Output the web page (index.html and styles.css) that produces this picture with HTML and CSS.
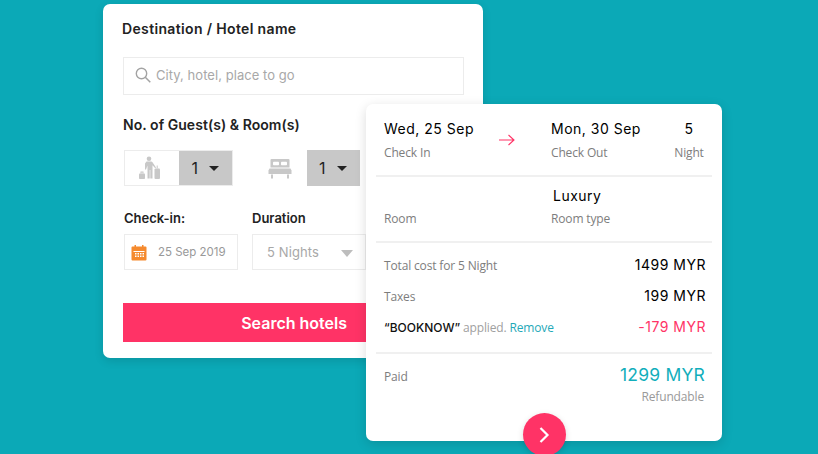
FILE: index.html
```html
<!DOCTYPE html>
<html lang="en">
<head>
    <meta charset="UTF-8">
    <title>Hotel booking</title>
    <link rel="stylesheet" href="styles.css">
</head>
<body>
    <form class="search-card">
        <h2 class="field-title">Destination / Hotel name</h2>
        <div class="search-input">
            <svg class="search-icon" width="16" height="16" viewBox="0 0 16 16"><circle cx="6.500" cy="6.500" r="5.200" fill="none" stroke="#a3a3a3" stroke-width="1.400"/><path d="M10.300 10.300l5 5" stroke="#a3a3a3" stroke-width="1.500" fill="none"/></svg>
            <span>City, hotel, place to go</span>
        </div>
        <h2 class="field-title guests-title">No. of Guest(s) &amp; Room(s)</h2>
        <div class="guests-row">
            <div class="counter boxed">
                <span class="counter-icon">
                    <svg width="24" height="24" viewBox="0 0 24 24" fill="#c8c8c8"><circle cx="12" cy="2.800" r="2.300"/><path d="M9.500 5.500h5l1 .8 3.500 5.200-.8.800-2.700-3V22.500h-2.200v-8.500h-.6v8.500h-2.200V9.500L9 13.500H8V7.500z"/><rect x="2" y="17.500" width="6" height="5.500" rx=".8"/><path d="M3.500 17.500V15.500h3v2h-1v-1h-1v1z"/><rect x="17.500" y="12.500" width="5.500" height="10.500" rx="1"/><rect x="19.700" y="9.500" width="1" height="3"/></svg>
                </span>
                <span class="counter-value">1 <i class="caret"></i></span>
            </div>
            <div class="counter">
                <span class="counter-icon bed">
                    <svg width="24" height="21" viewBox="0 0 24 21" fill="#c8c8c8"><path d="M3.500 1h17a1 1 0 0 1 1 1v7.500h-19V2a1 1 0 0 1 1-1z"/><rect x="5" y="3.800" width="6" height="3.400" rx=".8" fill="#fff"/><rect x="13" y="3.800" width="6" height="3.400" rx=".8" fill="#fff"/><path d="M1.500 10.500h21l1 2v3.500H.5v-3.500z"/><rect x="3" y="16.500" width="2" height="4"/><rect x="19" y="16.500" width="2" height="4"/></svg>
                </span>
                <span class="counter-value">1 <i class="caret"></i></span>
            </div>
        </div>
        <div class="dates-row">
            <div class="date-col">
                <h3 class="small-title">Check-in:</h3>
                <div class="date-box">
                    <svg width="16" height="17" viewBox="0 0 16 17"><path fill="#f58a2e" d="M1.500 2.500H3.500V1h1.500v1.500h6V1h1.500v1.500h2a1 1 0 0 1 1 1v12a1 1 0 0 1-1 1h-13a1 1 0 0 1-1-1v-12a1 1 0 0 1 1-1z"/><path fill="#fff" d="M2.500 7h11v1h-11zM4 9h1.500v1.500H4zm2.500 0H8v1.500H6.500zM9 9h1.500v1.500H9zm2.500 0H13v1.500h-1.500zM4 11.500h1.500V13H4zm2.500 0H8V13H6.500zm2.500 0h1.500V13H9zm2.500 0H13V13h-1.500z"/></svg>
                    <span>25 Sep 2019</span>
                </div>
            </div>
            <div class="duration-col">
                <h3 class="small-title">Duration</h3>
                <div class="duration-box"><span>5 Nights</span><i class="caret grey"></i></div>
            </div>
        </div>
        <button type="button" class="search-btn"><span>Search hotels</span></button>
    </form>

    <section class="summary-card">
        <div class="summary-row top-row">
            <div class="col-checkin">
                <div class="value">Wed, 25 Sep</div>
                <div class="label">Check In</div>
            </div>
            <svg class="arrow" width="16" height="12" viewBox="0 0 16 12"><path d="M0 6h14.500M9.500 1l5.500 5-5.500 5" fill="none" stroke="#ff3366" stroke-width="1.100"/></svg>
            <div class="col-checkout">
                <div class="value">Mon, 30 Sep</div>
                <div class="label">Check Out</div>
            </div>
            <div class="col-night">
                <div class="value">5</div>
                <div class="label">Night</div>
            </div>
        </div>
        <div class="summary-row room-row">
            <div class="label">Room</div>
            <div class="col-room">
                <div class="value">Luxury</div>
                <div class="label">Room type</div>
            </div>
        </div>
        <div class="cost-list">
            <div class="cost-line">
                <span class="label">Total cost for 5 Night</span>
                <span class="value">1499 MYR</span>
            </div>
            <div class="cost-line">
                <span class="label">Taxes</span>
                <span class="value">199 MYR</span>
            </div>
            <div class="cost-line">
                <span class="label"><b>“BOOKNOW”</b> <em>applied.</em> <a href="#">Remove</a></span>
                <span class="value pink">-179 MYR</span>
            </div>
        </div>
        <div class="paid-row">
            <span class="label">Paid</span>
            <div class="paid-total">
                <div class="paid-value">1299 MYR</div>
                <div class="label light">Refundable</div>
            </div>
        </div>
        <button type="button" class="next-btn">
            <svg width="12" height="18" viewBox="0 0 12 18"><path d="M2.500 2l7 7-7 7" fill="none" stroke="#fff" stroke-width="2.200"/></svg>
        </button>
    </section>
</body>
</html>
```

FILE: styles.css
```css
* { box-sizing: border-box; }
html, body { height: 100%; }
body {
    margin: 0;
    background-color: #0ba9b7;
    font-family: "Lato", sans-serif;
    overflow: hidden;
    position: relative;
}

/* Left card with the search form */
.search-card {
    position: absolute;
    left: 103px;
    top: 4px;
    width: 380px;
    height: 354px;
    padding: 16px 20px 0 20px;
    background-color: #fff;
    border-radius: 7px;
    box-shadow: 0 3px 10px rgba(0, 0, 0, 0.12);
}
.field-title {
    margin: 0 0 0 -1px;
    font-family: "Inter", sans-serif;
    font-size: 14px;
    font-weight: 600;
    line-height: 18px;
    letter-spacing: 0.35px;
    color: #222;
}
.search-input {
    display: flex;
    align-items: center;
    gap: 5px;
    width: 341px;
    height: 38px;
    margin-top: 19px;
    padding: 0 0 2px 11px;
    border: 1px solid #ececec;
    font-family: "Inter", sans-serif;
    font-size: 13px;
    letter-spacing: 0.05px;
    color: #a8a8a8;
}
.guests-title { margin: 21px 0 0 0; letter-spacing: 0.05px; }
.guests-row {
    display: flex;
    gap: 35px;
    margin: 16px 0 0 1px;
}
.counter {
    display: flex;
    height: 36px;
}
.counter.boxed { width: 109px; border: 1px solid #ececec; }
.counter-icon {
    display: flex;
    align-items: center;
    justify-content: center;
    width: 55px;
    padding-right: 7px;
}
.counter-icon.bed { width: 35px; margin-right: 4px; padding-right: 0; justify-content: flex-start; }
.counter-value {
    display: flex;
    align-items: center;
    gap: 11px;
    width: 53px;
    padding-left: 12px;
    background-color: #c8c8c8;
    font-family: "Inter", sans-serif;
    font-size: 16px;
    color: #222;
}
.caret {
    width: 0;
    height: 0;
    border-left: 5px solid transparent;
    border-right: 5px solid transparent;
    border-top: 5px solid #222;
}
.caret.grey {
    margin-top: 3px;
    border-left-width: 6px;
    border-right-width: 6px;
    border-top: 7px solid #bdbdbd;
}
.dates-row {
    display: flex;
    gap: 14px;
    margin: 24px 0 0 1px;
}
.small-title {
    margin: 0 0 8px 0;
    font-family: "Inter", sans-serif;
    font-size: 13px;
    font-weight: 600;
    line-height: 16px;
    color: #222;
}
.date-box {
    display: flex;
    align-items: center;
    gap: 11px;
    width: 114px;
    height: 36px;
    padding-left: 6px;
    border: 1px solid #ececec;
    font-family: "Inter", sans-serif;
    font-size: 11.500px;
    color: #999;
}
.duration-box {
    display: flex;
    align-items: center;
    justify-content: space-between;
    width: 114px;
    height: 36px;
    padding: 0 12px 0 14px;
    border: 1px solid #ececec;
    font-family: "Inter", sans-serif;
    font-size: 13px;
    letter-spacing: 0.1px;
    color: #a8a8a8;
}
.search-btn {
    display: block;
    width: 340px;
    height: 39px;
    margin-top: 33px;
    padding: 0 116px 0 0;
    border: none;
    background-color: #ff3366;
    color: #fff;
    font-family: "Inter", sans-serif;
    font-size: 16px;
    font-weight: 600;
    text-align: right;
}

/* Right card with the price summary, sits over the form */
.summary-card {
    position: absolute;
    left: 366px;
    top: 104px;
    width: 356px;
    height: 337px;
    padding: 0 10px;
    background-color: #fff;
    border-radius: 7px;
    box-shadow: 0 3px 12px rgba(0, 0, 0, 0.14);
}
.value {
    font-family: "Inter", sans-serif;
    font-size: 14px;
    font-weight: 400;
    line-height: 18px;
    letter-spacing: 0.5px;
    color: #000;
}
.label {
    font-family: "Open Sans", sans-serif;
    font-size: 12px;
    line-height: 16px;
    letter-spacing: -0.15px;
    color: #7d7d7d;
}
.label.light { color: #999; }
.summary-row {
    display: flex;
    padding: 0 8px;
    border-bottom: 2px solid #f0f0f0;
}
.top-row { height: 73px; padding-top: 16px; align-items: flex-start; }
.top-row .label { margin-top: 7px; }
.col-checkin { width: 114px; }
.arrow { margin: 14px 0 0 1px; }
.col-checkout { width: 123px; margin-left: 36px; }
.col-night { text-align: center; flex: 1; }
.room-row { height: 66px; padding-top: 10px; }
.room-row > .label { width: 167px; padding-top: 24px; }
.col-room .value { margin-left: 2px; }
.col-room .label { margin-top: 6px; }
.cost-list {
    display: flex;
    flex-direction: column;
    gap: 13px;
    height: 111px;
    padding: 14px 6px 0 8px;
    border-bottom: 2px solid #f0f0f0;
}
.cost-line {
    display: flex;
    justify-content: space-between;
    align-items: center;
    height: 18px;
}
.cost-line .value { margin-bottom: 2px; }
.cost-line b { font-family: "Inter", sans-serif; font-weight: 500; letter-spacing: 0; color: #111; }
.cost-line em { font-style: normal; color: #a0a0a0; }
.cost-line a { color: #1fa9b8; text-decoration: none; }
.pink, .value.pink { color: #ff3366; }
.paid-row {
    display: flex;
    justify-content: space-between;
    padding: 10px 7px 0 8px;
}
.paid-row > .label { margin-top: 5px; }
.paid-total { text-align: right; }
.paid-value {
    font-family: "Inter", sans-serif;
    font-size: 17.500px;
    line-height: 22px;
    letter-spacing: 0.2px;
    color: #12aebb;
}
.paid-total .label { margin: 3px 1px 0 0; }
.next-btn {
    position: absolute;
    left: 157px;
    top: 309px;
    width: 43px;
    height: 43px;
    display: flex;
    align-items: center;
    justify-content: center;
    padding: 0 2px 0 0;
    border: none;
    border-radius: 50%;
    background-color: #ff3366;
    box-shadow: 0 2px 6px rgba(0, 0, 0, 0.15);
}
```
